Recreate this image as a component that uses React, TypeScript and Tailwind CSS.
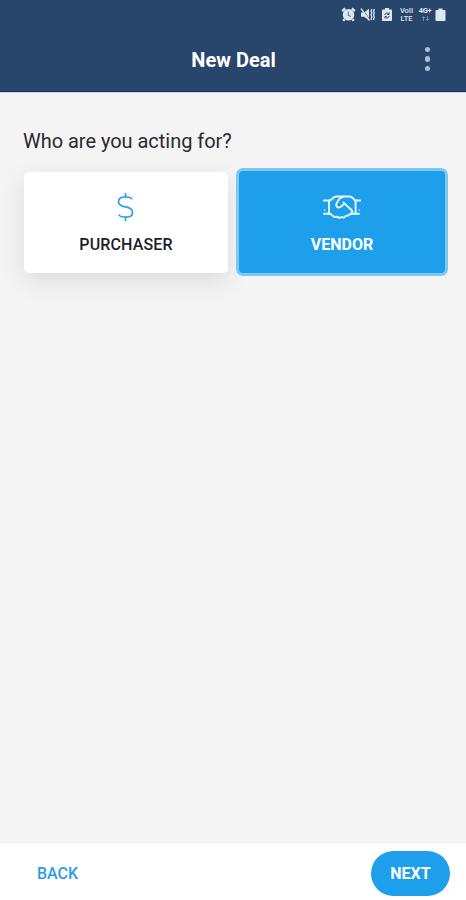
import type { ReactNode } from "react";

export default function App() {
  return (
    <div
      className="flex h-[900px] w-full flex-col bg-[#f4f4f4]"
      style={{ fontFamily: "Roboto, sans-serif" }}
    >
      {/* Header */}
      <header className="h-[92px] shrink-0 border-b border-[#0f3564] bg-[#28466b]">
        <StatusBar />
        <div className="grid h-[60px] grid-cols-[1fr_auto_1fr] items-center">
          <span />
          <h1 className="pl-px pt-[2px] text-[20px] font-bold leading-6 text-white">New Deal</h1>
          <button className="mr-[36px] flex flex-col gap-[4px] justify-self-end" aria-label="Menu">
            <span className="size-[5.5px] rounded-full bg-[#a9c0d6]" />
            <span className="size-[5.5px] rounded-full bg-[#a9c0d6]" />
            <span className="size-[5.5px] rounded-full bg-[#a9c0d6]" />
          </button>
        </div>
      </header>

      {/* Body */}
      <main className="flex-1 border-t border-[#c9d3e0] pt-[36px]">
        <p className="ml-[23px] text-[20px] leading-6 tracking-[-0.03px] text-[#2b2b2e]">
          Who are you acting for?
        </p>
        <div className="mt-[15px] flex items-start pl-[24px]">
          <DealOption label="PURCHASER" icon={<DollarIcon />} />
          <DealOption label="VENDOR" icon={<HandshakeIcon />} selected />
        </div>
      </main>

      {/* Footer */}
      <footer className="flex h-[58px] shrink-0 items-center justify-between border-t border-[#ececec] bg-white pl-[37px] pr-[16px] pt-[4px]">
        <button className="text-[16px] font-medium leading-5 text-[#2e9be0]">BACK</button>
        <button className="h-[45px] w-[79px] rounded-full bg-[#1e9fec] text-[16px] font-bold text-white">
          NEXT
        </button>
      </footer>
    </div>
  );
}

function DealOption({ label, icon, selected }: { label: string; icon: ReactNode; selected?: boolean }) {
  return (
    <button
      className={
        selected
          ? "ml-[8px] flex h-[108px] w-[212px] flex-col items-center rounded-[7px] border-[3px] border-[#81c7f5] bg-[#1e9fec] pt-[21px] text-white"
          : "mt-[4px] flex h-[101px] w-[204px] flex-col items-center rounded-[5px] bg-white pt-[20px] text-[#1c1c2b] shadow-[0_8px_24px_rgba(0,0,0,0.1)]"
      }
    >
      <span className="flex h-[30px] items-center">{icon}</span>
      <span className={selected ? "mt-[13px] text-[16px] font-bold leading-5" : "mt-[13px] text-[16px] font-medium leading-5 tracking-[0.15px]"}>
        {label}
      </span>
    </button>
  );
}

function DollarIcon() {
  return (
    <svg width="18" height="30" viewBox="0 0 18 30" fill="none" stroke="#2f9fe6" strokeWidth="1.7" strokeLinecap="round" strokeLinejoin="round">
      <path d="M8.5 1.5V5M8.5 25v3.500" />
      <path d="M14.700 6.600C13.600 5.400 12.100 5 10 5H7.200C3.700 5 1.500 6.800 1.500 9.800c0 2.200 1.200 3.400 4 4.300l6 1.500c2.800.9 4 2.300 4 4.800 0 2.900-2 4.600-5.500 4.600H6.800c-2.100 0-3.600-.5-4.700-1.800" />
    </svg>
  );
}

function HandshakeIcon() {
  return (
    <svg width="38" height="24" viewBox="0 0 38 24" fill="none" stroke="#e8f6ff" strokeWidth="1.9" strokeLinecap="round" strokeLinejoin="round">
      <path d="M.9 5.500h6.300L11 2.200q1-.7 2.500-.7h13q1.500 0 2.600.9l3 3.100h5M.9 18.800h6.300l4 3.200 2.600-.3 2.400 1.200 2.300-.8 2.500.5 2-2 2.400-.1 2-1.700h8.700" />
      <path d="M6 5.500v13.300M32.600 5.500v13.300" />
      <path d="M20.500 1.800c-2.500.3-4.600 2.400-6.200 5.200-1.300 2.300-1.600 3.900-.2 4.900 1.700 1.200 4.200.3 5.900-2.100l1.800-1.200M20.500 7.600l8 7.400c.9.900.9 2.300-.2 4" />
      <path d="M1.600 15.200h.1M36.400 15.200h.1" strokeWidth="1.500" />
    </svg>
  );
}

function StatusBar() {
  return (
    <div className="flex h-[29px] items-center pl-[341px] text-[#dce7f1]">
      {/* Alarm */}
      <svg width="15" height="15" viewBox="0 0 15 15" fill="none" stroke="currentColor">
        <circle cx="7.5" cy="7.8" r="5.8" fill="currentColor" stroke="none" />
        <path d="M1.200 4.200 4.200 1.500M13.800 4.200l-3-2.700M3.500 12.200l-1.300 1.500M11.500 12.200l1.300 1.500" strokeWidth="2.4" />
        <path d="M7.300 4.800v3.500l2.500 1.300" stroke="#5f7c9c" strokeWidth="1.1" />
      </svg>
      {/* Muted, vibrating */}
      <svg className="ml-[4px]" width="16" height="15" viewBox="0 0 16 15" fill="none" stroke="currentColor">
        <path d="M1 5.500h3L9 1.800v11.500L4 9.700H1z" fill="currentColor" stroke="none" />
        <path d="M2 1.500l8 11.500" stroke="#28466b" strokeWidth="1" />
        <path d="M1 1.500l8.500 12" strokeWidth="1.300" />
        <path d="m11.800 2-.8 2 .8 2-.8 2 .8 2-.8 3M14.300 2l-.8 2 .8 2-.8 2 .8 2-.8 3" strokeWidth="1.300" />
      </svg>
      {/* Battery saver */}
      <svg className="ml-[5px]" width="12" height="15" viewBox="0 0 12 15">
        <path d="M4 1h4v1.500h2a1 1 0 0 1 1 1V13a1 1 0 0 1-1 1H2a1 1 0 0 1-1-1V3.500a1 1 0 0 1 1-1h2z" fill="currentColor" />
        <path d="M3.800 8a2.200 2.200 0 0 1 4-1M8.200 9a2.200 2.200 0 0 1-4 1M8 5.500v2H6.300M4 11.500v-2h1.700" fill="none" stroke="#28466b" strokeWidth="1" />
      </svg>
      <span className="ml-[6px] flex w-[15px] flex-col items-center text-[7.5px] font-medium">
        <span className="h-[7px] leading-[7px]">VoII</span>
        <span className="h-[9px] leading-[9px]">LTE</span>
      </span>
      <span className="ml-[4px] flex w-[14px] flex-col items-center text-[7.5px] font-bold leading-[8px] tracking-[-0.3px]">
        <span>4G+</span>
        <svg width="9" height="7" viewBox="0 0 9 7" fill="none" stroke="#6f89a8">
          <path d="M2.500 6V1.500M1 3l1.500-1.700L4 3M6.500 1v4.500M5 4l1.500 1.700L8 4" />
        </svg>
      </span>
      {/* Battery */}
      <svg className="ml-[3px]" width="11" height="15" viewBox="0 0 11 15">
        <path d="M3.500 1.500h4V3H9.500a1 1 0 0 1 1 1v9a1 1 0 0 1-1 1h-8a1 1 0 0 1-1-1V4a1 1 0 0 1 1-1h2z" fill="currentColor" />
      </svg>
    </div>
  );
}
